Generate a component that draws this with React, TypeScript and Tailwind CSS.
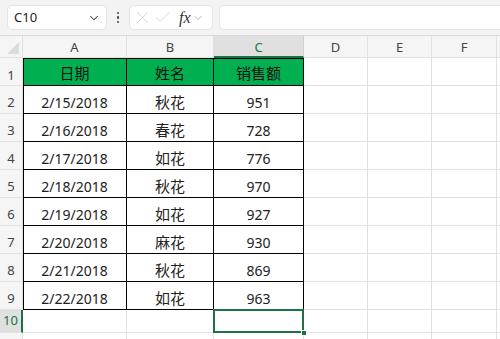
import { ChevronDown, X, Check } from "lucide-react";

const rows = [
  ["2/15/2018", "秋花", "951"],
  ["2/16/2018", "春花", "728"],
  ["2/17/2018", "如花", "776"],
  ["2/18/2018", "秋花", "970"],
  ["2/19/2018", "如花", "927"],
  ["2/20/2018", "麻花", "930"],
  ["2/21/2018", "秋花", "869"],
  ["2/22/2018", "如花", "963"],
];

const cols = ["A", "B", "C", "D", "E", "F"];
const font = { fontFamily: '"Noto Sans", "Noto Sans CJK SC", sans-serif' };
const cjk = { fontFamily: '"Noto Sans CJK SC", sans-serif' };

const Grid = "border-r border-b border-[#e1e1e1]";
const RowHead = `${Grid} bg-[#f5f5f5] flex items-center justify-center text-[13px] text-[#444]`;

const App = () => {
  return (
    <div className="w-[500px] h-[339px] overflow-hidden bg-white text-[#222]" style={font}>
      {/* formula bar */}
      <div className="h-[36px] bg-[#f3f3f3] border-b border-[#dadada] flex items-center pl-[7px] gap-[6px]">
        <div className="w-[100px] h-[25px] bg-white rounded-[5px] border border-[#e3e3e3] flex items-center justify-between pl-[6px] pr-[5px]">
          <span className="text-[13px] text-[#222]">C10</span>
          <ChevronDown className="w-[14px] h-[14px] text-[#444]" strokeWidth={1.8} />
        </div>
        <div className="w-[10px] flex flex-col items-center gap-[2px]">
          <div className="w-[2.5px] h-[2.5px] bg-[#444] rounded-full" />
          <div className="w-[2.5px] h-[2.5px] bg-[#444] rounded-full" />
          <div className="w-[2.5px] h-[2.5px] bg-[#444] rounded-full" />
        </div>
        <div className="w-[84px] h-[25px] bg-white rounded-[5px] border border-[#e3e3e3] flex items-center pl-[3px]">
          <X className="w-[19px] h-[19px] text-[#c8c8c8]" strokeWidth={1} />
          <Check className="ml-[1px] w-[19px] h-[19px] text-[#c8c8c8]" strokeWidth={1} />
          <span className="ml-[7px] text-[16px] italic text-[#333]" style={{ fontFamily: '"Liberation Serif", serif' }}>fx</span>
          <ChevronDown className="ml-[1px] w-[12px] h-[12px] text-[#999]" strokeWidth={1.5} />
        </div>
        <div className="flex-1 h-[25px] bg-white rounded-l-[5px] border border-r-0 border-[#e3e3e3]" />
      </div>

      {/* sheet */}
      <div className="grid grid-cols-[23px_104px_87px_90px_64px_64px_65px_3px] grid-rows-[22px_repeat(9,28px)_23px_28px]">
        <div className={`${Grid} bg-[#f5f5f5] relative`}>
          <div className="absolute right-[3px] bottom-[3px] w-0 h-0 border-l-[12px] border-l-transparent border-b-[12px] border-b-[#dcdcdc]" />
        </div>
        {cols.map((c) => (
          <div
            key={c}
            className={
              c === "C"
                ? "bg-[#e0e0e0] border-r border-[#d0d0d0] border-b-2 border-b-[#1e7145] flex items-center justify-center pt-[3px] text-[13px] text-[#1e7145]"
                : `${Grid} bg-[#f5f5f5] flex items-center justify-center pt-[3px] text-[13px] text-[#444]`
            }
          >
            {c}
          </div>
        ))}
        <div className="bg-[#f5f5f5] border-b border-[#e1e1e1]" />

        {/* row 1 */}
        <div className={`${RowHead} pt-[9px]`}>1</div>
        {["日期", "姓名", "销售额"].map((h, i) => (
          <div
            key={h}
            className={`bg-[#00b050] border-r border-b border-black flex items-center justify-center pt-[4px] text-[15px] text-[#111] ${i === 0 ? "shadow-[inset_1px_1px_0_#000]" : "shadow-[inset_0_1px_0_#000]"}`}
            style={cjk}
          >
            {h}
          </div>
        ))}
        <div className={Grid} />
        <div className={Grid} />
        <div className={Grid} />
        <div className="border-b border-[#e1e1e1]" />

        {rows.map((r, idx) => (
          <div key={idx} className="contents">
            <div className={`${RowHead} pt-[7px]`}>{idx + 2}</div>
            <div className="border-r border-b border-black shadow-[inset_1px_0_0_#000] flex items-center justify-center pt-[5px] text-[14px]">{r[0]}</div>
            <div className="border-r border-b border-black flex items-center justify-center pt-[5px] text-[15px]" style={cjk}>{r[1]}</div>
            <div className="border-r border-b border-black flex items-center justify-center pt-[5px] text-[14px]">{r[2]}</div>
            <div className={Grid} />
            <div className={Grid} />
            <div className={Grid} />
            <div className="border-b border-[#e1e1e1]" />
          </div>
        ))}

        {/* row 10 */}
        <div className="bg-[#e0e0e0] border-r-2 border-r-[#1e7145] border-b border-[#e1e1e1] flex items-center justify-center text-[13px] text-[#1e7145]">10</div>
        <div className={Grid} />
        <div className={Grid} />
        <div className={`${Grid} relative`}>
          <div className="absolute -left-[1px] -top-[1px] -right-[1px] -bottom-[1px] border-2 border-[#1e7145]" />
          <div className="absolute -right-[4px] -bottom-[4px] w-[6px] h-[6px] bg-[#1e7145] border border-white" />
        </div>
        <div className={Grid} />
        <div className={Grid} />
        <div className={Grid} />
        <div className="border-b border-[#e1e1e1]" />

        {/* row 11 (cut off) */}
        <div className={`${RowHead} items-start pt-[1px]`}>11</div>
        <div className={Grid} />
        <div className={Grid} />
        <div className={Grid} />
        <div className={Grid} />
        <div className={Grid} />
        <div className={Grid} />
        <div className="border-b border-[#e1e1e1]" />
      </div>
    </div>
  );
};

export default App;
